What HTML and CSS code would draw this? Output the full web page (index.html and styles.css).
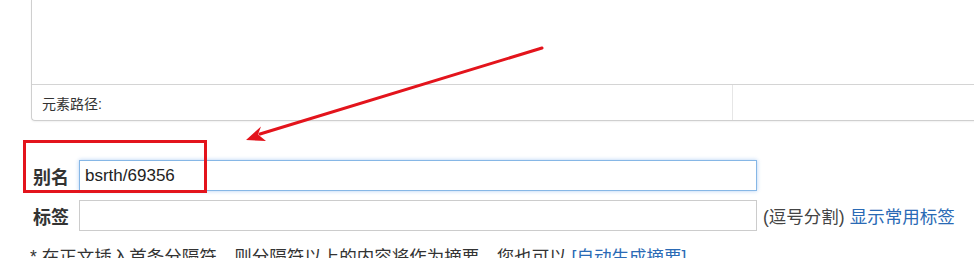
FILE: index.html
```html
<!DOCTYPE html>
<html lang="zh-CN">
<head>
<meta charset="UTF-8"/>
<title>编辑文章</title>
<link rel="stylesheet" href="styles.css">
</head>
<body>

<!-- EDITOR (scrolled, only the bottom is visible) -->
<div class="editor">
  <div class="editor-body"></div>
  <div class="editor-status">
    <div class="status-path">元素路径:</div>
    <div class="status-extra"></div>
  </div>
</div>

<!-- FIELDS -->
<div class="fields">
  <div class="field-row">
    <label class="field-label">别名</label>
    <input type="text" class="field-input focused" value="bsrth/69356"/>
  </div>
  <div class="field-row">
    <label class="field-label">标签</label>
    <input type="text" class="field-input"/>
    <span class="field-hint">(逗号分割)</span>
    <a class="link">显示常用标签</a>
  </div>
  <div class="field-note">* 在正文插入首条分隔符，则分隔符以上的内容将作为摘要，您也可以 <a class="link">[自动生成摘要]</a></div>
</div>

<!-- annotation drawn over the page -->
<svg class="markup" width="974" height="258" viewBox="0 0 974 258">
  <rect x="24.5" y="141.5" width="181" height="50" fill="none" stroke="#e3141c" stroke-width="3"/>
  <line x1="542" y1="48" x2="260" y2="134" stroke="#e3141c" stroke-width="3" stroke-linecap="round"/>
  <polygon points="246,140 261,126.5 258,134.5 266,141" fill="#e3141c"/>
</svg>

</body>
</html>
```

FILE: styles.css
```css
/* GLOBAL */
body,html {
  margin:0; padding:0; background:#fff; overflow:hidden;
  font-family:"Liberation Sans", "Noto Sans CJK SC", sans-serif; color:#333;
}
body {position:relative; width:974px; height:258px;}
.link {color:#2a6ab5; text-decoration:none; cursor:pointer;}

/* EDITOR */
.editor {
  margin-left:31px; width:1000px;
  border-left:1px solid #cfcfcf; border-bottom:1px solid #cfcfcf; border-radius:0 0 0 4px;
  box-shadow:0 1px 2px rgba(0,0,0,0.06);
}
.editor-body {height:84px;}
.editor-status {display:flex; height:35px; border-top:1px solid #d4d4d4;}
.status-path {
  width:701px; padding-left:10px; padding-top:3px; box-sizing:border-box; border-right:1px solid #e6e6e6;
  font-size:14px; line-height:32px; color:#333;
}
.status-extra {flex:1;}

/* FIELDS */
.fields {margin-top:39px; padding-left:33px; display:flex; flex-direction:column; gap:9px;}
.field-row {display:flex; align-items:center;}
.field-label {width:37px; margin-right:9px; font-size:18px; font-weight:bold; color:#333;}
.field-input {
  width:678px; height:31px; box-sizing:border-box; margin:0; padding:0 5px;
  border:1px solid #cccccc; background:#fff; outline:none;
  font-family:"Liberation Sans", sans-serif; font-size:17px; color:#222;
}
.field-input.focused {border-color:#86b7e6; box-shadow:0 0 4px rgba(82,150,230,0.45);}
.field-hint {margin-left:6px; font-size:17.5px; color:#444;}
.field-row .link {margin-left:5px; font-size:17.5px;}
.field-note {margin-left:-3px; margin-top:5px; font-size:17.5px; line-height:24px; color:#333; white-space:nowrap;}

/* ANNOTATION */
.markup {position:absolute; top:0; left:0; pointer-events:none;}
```
